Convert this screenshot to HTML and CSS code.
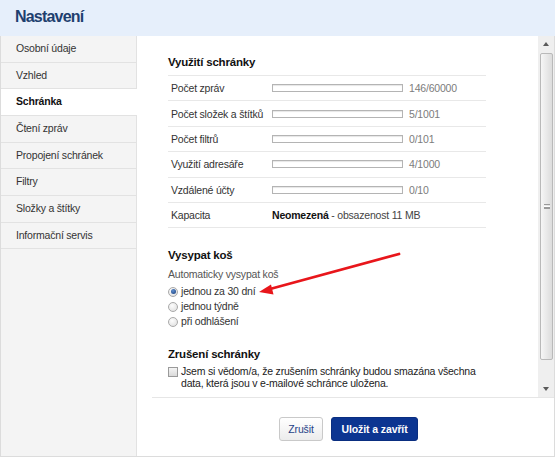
FILE: index.html
```
<!DOCTYPE html>
<html lang="cs">
<head>
<meta charset="utf-8">
<title>Nastavení</title>
<link rel="stylesheet" href="styles.css">
</head>
<body>
<div class="dialog">
  <header class="hdr"><h1 class="title">Nastavení</h1></header>
  <div class="body">
    <nav class="side">
      <div class="item">Osobní údaje</div>
      <div class="item">Vzhled</div>
      <div class="item active">Schránka</div>
      <div class="item">Čtení zpráv</div>
      <div class="item">Propojení schránek</div>
      <div class="item">Filtry</div>
      <div class="item">Složky a štítky</div>
      <div class="item">Informační servis</div>
    </nav>
    <main class="main">
      <div class="scroll">
        <div class="content">
          <h2 class="sec-title">Využití schránky</h2>
          <div class="stats">
            <div class="row"><span class="lbl">Počet zpráv</span><span class="bar"></span><span class="val">146/60000</span></div>
            <div class="row"><span class="lbl">Počet složek a štítků</span><span class="bar"></span><span class="val">5/1001</span></div>
            <div class="row"><span class="lbl">Počet filtrů</span><span class="bar"></span><span class="val">0/101</span></div>
            <div class="row"><span class="lbl">Využití adresáře</span><span class="bar"></span><span class="val">4/1000</span></div>
            <div class="row"><span class="lbl">Vzdálené účty</span><span class="bar"></span><span class="val">0/10</span></div>
            <div class="row"><span class="lbl">Kapacita</span><span class="cap"><b>Neomezená</b> - obsazenost 11 MB</span></div>
          </div>

          <h2 class="sec-title sec2">Vysypat koš</h2>
          <div class="hint">Automaticky vysypat koš</div>
          <div class="radios">
            <label class="opt"><span class="radio on"></span>jednou za 30 dní</label>
            <label class="opt"><span class="radio"></span>jednou týdně</label>
            <label class="opt"><span class="radio"></span>při odhlášení</label>
          </div>

          <h2 class="sec-title sec3">Zrušení schránky</h2>
          <label class="agree"><span class="check"></span><span class="agree-text">Jsem si vědom/a, že zrušením schránky budou smazána všechna data, která jsou v e-mailové schránce uložena.</span></label>
        </div>
        <div class="sbar">
          <div class="sbtn"><span class="tri up"></span></div>
          <div class="thumb"><span class="grip"></span></div>
          <div class="track"></div>
          <div class="sbtn"><span class="tri down"></span></div>
        </div>
      </div>
      <div class="footer">
        <button class="btn btn-cancel">Zrušit</button>
        <button class="btn btn-save">Uložit a zavřít</button>
      </div>
    </main>
  </div>
  <svg class="arrow" width="555" height="457" viewBox="0 0 555 457">
    <line x1="399" y1="254" x2="270" y2="289" stroke="#e8161b" stroke-width="2.8" stroke-linecap="round"/>
    <polygon points="259,292 271,284.5 273.5,294.5" fill="#e8161b"/>
  </svg>
</div>
</body>
</html>
```

FILE: styles.css
```
* { box-sizing: border-box; }
html, body { margin: 0; padding: 0; background: #fff; }
body {
  font-family: "Liberation Sans", Arial, sans-serif;
  font-size: 10.5px;
  letter-spacing: -0.2px;
  color: #333;
}
.dialog {
  position: relative;
  width: 555px;
  height: 457px;
  display: flex;
  flex-direction: column;
}
.hdr {
  height: 36px;
  background: #e6effb;
  padding: 0 15px;
  display: flex;
  align-items: center;
}
.title {
  margin: 0;
  font-size: 16px;
  font-weight: bold;
  letter-spacing: -0.8px;
  color: #1e406f;
  padding-bottom: 2px;
}
.body {
  flex: 1;
  display: flex;
  border: 1px solid #dcdcdc;
  border-top: 0;
}
.side {
  width: 136px;
  background: #f4f4f4;
  border-right: 1px solid #e2e2e2;
}
.item {
  height: 26.67px;
  line-height: 25.67px;
  padding-left: 15px;
  border-bottom: 1px solid #e2e2e2;
  color: #333;
}
.item.active {
  background: #fff;
  margin-right: -1px;
  font-weight: bold;
  color: #111;
}
.main {
  flex: 1;
  display: flex;
  flex-direction: column;
  background: #fff;
}
.scroll {
  height: 362px;
  margin-left: 15px;
  border-bottom: 1px solid #e6e6e6;
  display: flex;
}
.content {
  flex: 1;
  overflow: hidden;
  padding: 19px 16px 0 16px;
}
.sec-title {
  margin: 0;
  font-size: 11.5px;
  line-height: 14px;
  font-weight: bold;
  letter-spacing: -0.2px;
  color: #111;
}
.stats {
  width: 318px;
  margin-top: 6px;
  border-bottom: 1px solid #e8e8e8;
}
.row {
  height: 25.4px;
  border-top: 1px solid #e8e8e8;
  display: flex;
  align-items: center;
  padding-left: 3px;
}
.lbl { width: 101px; flex: none; }
.bar {
  width: 131px;
  height: 8px;
  border: 1px solid #b4b4b4;
  background: #fff;
  box-shadow: inset 0 1px 1px #e6e6e6;
  flex: none;
}
.val { margin-left: 6px; color: #7c7c7c; }
.cap { color: #444; }
.cap b { color: #111; }
.sec2 { margin-top: 20px; }
.hint { margin-top: 5px; line-height: 14px; color: #555; }
.radios { margin-top: 3px; display: flex; flex-direction: column; }
.opt { display: flex; align-items: center; line-height: 15px; height: 15px; color: #333; }
.radio {
  width: 10px; height: 10px;
  border-radius: 50%;
  border: 1px solid #a9a9a9;
  background: radial-gradient(circle at 40% 35%, #fdfdfd, #dcdcdc);
  margin-right: 3px;
  flex: none;
  position: relative;
}
.radio.on::after {
  content: "";
  position: absolute;
  left: 1.5px; top: 1.5px;
  width: 5px; height: 5px;
  border-radius: 50%;
  background: radial-gradient(circle at 40% 35%, #5f8fd0, #173c78);
}
.sec3 { margin-top: 18px; }
.agree { display: flex; align-items: flex-start; margin-top: 5px; }
.check {
  width: 10px; height: 10px;
  border: 1px solid #9a9a9a;
  background: linear-gradient(#f4f4f4, #dadada);
  margin-top: 1px;
  margin-right: 3px;
  flex: none;
}
.agree-text { width: 302px; line-height: 11.5px; color: #222; }
.sbar {
  width: 16px;
  flex: none;
  background: #efefef;
  display: flex;
  flex-direction: column;
}
.sbtn {
  height: 16px;
  display: flex;
  align-items: center;
  justify-content: center;
  flex: none;
}
.tri { width: 0; height: 0; border-left: 3.5px solid transparent; border-right: 3.5px solid transparent; }
.tri.up { border-bottom: 4px solid #5a5a5a; }
.tri.down { border-top: 4px solid #5a5a5a; }
.thumb {
  height: 307px;
  margin: 1px 1px 0 2px;
  border: 1px solid #b9b9b9;
  border-radius: 2px;
  background: linear-gradient(to right, #f6f6f6, #dcdcdc);
  display: flex;
  align-items: center;
  justify-content: center;
  flex: none;
}
.grip {
  width: 6px; height: 5px;
  border-top: 1px solid #9a9a9a;
  border-bottom: 1px solid #9a9a9a;
  background: linear-gradient(#fff 0 1px, #9a9a9a 1px 2px, transparent 2px) 0 1px / 100% 3px no-repeat;
}
.track { flex: 1; }
.footer {
  flex: 1;
  display: flex;
  justify-content: center;
  align-items: flex-start;
  gap: 8px;
  padding-top: 19px;
  padding-left: 6px;
}
.btn {
  height: 24px;
  font-family: "Liberation Sans", Arial, sans-serif;
  font-size: 10.5px;
  letter-spacing: -0.1px;
  border-radius: 3px;
  padding: 0;
  cursor: pointer;
}
.btn-cancel {
  width: 44px;
  border: 1px solid #c9c9c9;
  background: linear-gradient(#ffffff, #ececec);
  color: #1f4287;
}
.btn-save {
  width: 87px;
  border: 1px solid #0a2e80;
  background: #0c3591;
  color: #fff;
  font-weight: bold;
}
.arrow {
  position: absolute;
  left: 0;
  top: 0;
  pointer-events: none;
}
```
